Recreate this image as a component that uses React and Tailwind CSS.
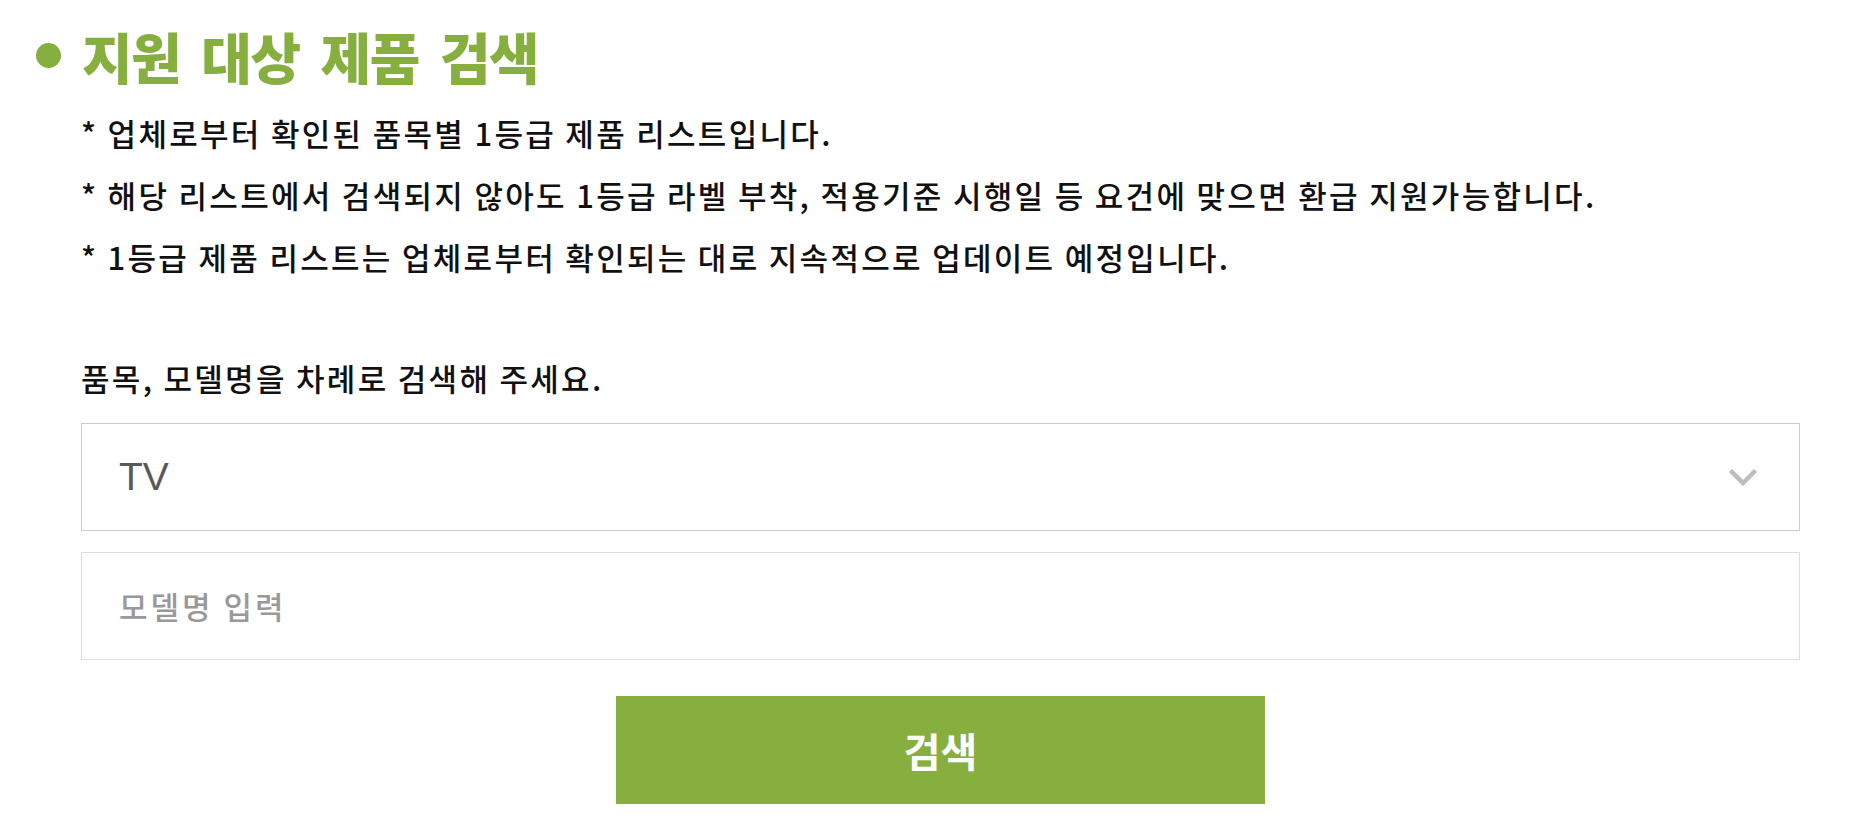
import { useState } from 'react';

const notes = [
  '* 업체로부터 확인된 품목별 1등급 제품 리스트입니다.',
  '* 해당 리스트에서 검색되지 않아도 1등급 라벨 부착, 적용기준 시행일 등 요건에 맞으면 환급 지원가능합니다.',
  '* 1등급 제품 리스트는 업체로부터 확인되는 대로 지속적으로 업데이트 예정입니다.',
];

function Chevron() {
  return (
    <svg width="30" height="19" viewBox="0 0 30 19" fill="none">
      <polyline points="2.5,2.5 15,15 27.5,2.5" stroke="#bdbdbd" strokeWidth="4.5" />
    </svg>
  );
}

export default function App() {
  const [model, setModel] = useState('');

  return (
    <div className="min-h-screen bg-white pl-[36px] pr-[76px] pt-[28px] font-['Noto_Sans_CJK_KR','Noto_Sans',sans-serif]">
      <div className="flex items-center gap-[21px]">
        <span className="w-[25px] h-[25px] rounded-full bg-[#87af40] shrink-0" />
        <h1 className="text-[55px] leading-[54px] font-black text-[#87af40] tracking-[-1.5px] [word-spacing:10px]">
          지원 대상 제품 검색
        </h1>
      </div>

      <div className="pl-[45px]">
        <ul className="mt-[20px]">
          {notes.map((n) => (
            <li key={n} className="text-[31px] leading-[62px] font-medium tracking-[2.3px] text-[#111]">
              {n}
            </li>
          ))}
        </ul>

        <p className="mt-[70px] text-[31px] leading-[40px] font-medium tracking-[2.3px] text-[#111]">
          품목, 모델명을 차례로 검색해 주세요.
        </p>

        <div className="mt-[25px] h-[108px] border border-[#cccccc] flex items-center justify-between pl-[37px] pr-[41px]">
          <span className="text-[39px] text-[#595959] font-['Liberation_Sans','Noto_Sans_CJK_KR',sans-serif]">TV</span>
          <Chevron />
        </div>

        <div className="mt-[21px] h-[108px] border border-[#dddddd] flex items-center pl-[37px]">
          <input
            value={model}
            onChange={(e) => setModel(e.target.value)}
            placeholder="모델명 입력"
            className="w-full outline-none text-[31px] font-medium tracking-[3px] text-[#333] placeholder:text-[#999] bg-transparent"
          />
        </div>

        <div className="mt-[36px] flex justify-center">
          <button className="w-[649px] h-[108px] bg-[#87af40] text-white text-[40px] font-bold">
            검색
          </button>
        </div>
      </div>
    </div>
  );
}
